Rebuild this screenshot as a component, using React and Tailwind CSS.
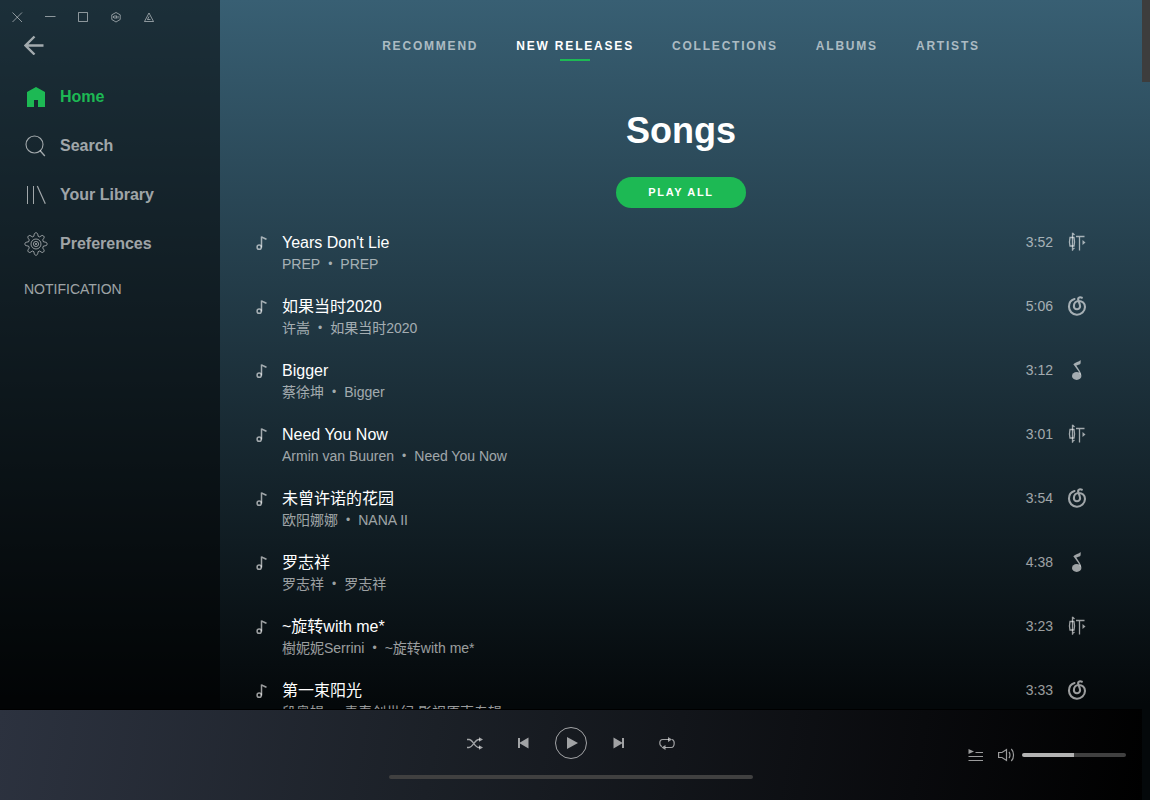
const windowButtons = [
  { label: 'Close', d: 'M0.5 0.5l9.500 9.500M10 0.5l-9.500 9.500' },
  { label: 'Minimize', d: 'M0 4.500h10.500' },
  { label: 'Maximize', d: 'M0.5 0.5h9v9h-9z' },
  { label: 'Developer tools', d: 'M5 0.5L9.200 2.800v4.700L5 10L0.800 7.500V2.800zM2.500 6V4M4 7V3M5.500 6.500V3.500M7 6.500V4' },
  { label: 'Pin on top', d: 'M5 1L9.500 9.500H0.500zM5 4.500L3.500 7.500h3' },
]

const menu = [
  { name: 'Home', icon: HomeIcon, active: true },
  { name: 'Search', icon: SearchIcon },
  { name: 'Your Library', icon: LibraryIcon },
  { name: 'Preferences', icon: GearIcon },
]

const tabs = ['Recommend', 'New Releases', 'Collections', 'Albums', 'Artists']

const songs = [
  { title: "Years Don't Lie", artist: 'PREP', album: 'PREP', time: '3:52', source: 'xiami' },
  { title: '如果当时2020', artist: '许嵩', album: '如果当时2020', time: '5:06', source: 'netease' },
  { title: 'Bigger', artist: '蔡徐坤', album: 'Bigger', time: '3:12', source: 'qq' },
  { title: 'Need You Now', artist: 'Armin van Buuren', album: 'Need You Now', time: '3:01', source: 'xiami' },
  { title: '未曾许诺的花园', artist: '欧阳娜娜', album: 'NANA II', time: '3:54', source: 'netease' },
  { title: '罗志祥', artist: '罗志祥', album: '罗志祥', time: '4:38', source: 'qq' },
  { title: '~旋转with me*', artist: '樹妮妮Serrini', album: '~旋转with me*', time: '3:23', source: 'xiami' },
  { title: '第一束阳光', artist: '段奥娟', album: '青春创世纪 影视原声专辑', time: '3:33', source: 'netease' },
]

function HomeIcon() {
  return (
    <svg className="w-6 h-6" viewBox="0 0 24 24" fill="currentColor">
      <path d="M12 2L3 7v15h7v-7h4v7h7V7z" />
    </svg>
  )
}

function SearchIcon() {
  return (
    <svg className="w-6 h-6" viewBox="0 0 24 24" fill="none" stroke="currentColor" strokeWidth="1.1">
      <circle cx="10.500" cy="10.500" r="8.500" />
      <path d="M16 16.500L20.800 22" strokeWidth="1.300" />
    </svg>
  )
}

function LibraryIcon() {
  return (
    <svg className="w-6 h-6" viewBox="0 0 24 24" fill="none" stroke="currentColor">
      <path d="M3.500 3v18M9.500 3v18" />
      <path d="M13.300 3L21.300 20.800" strokeWidth="1.200" />
    </svg>
  )
}

function GearIcon() {
  return (
    <svg className="w-6 h-6" viewBox="0 0 24 24" fill="none" stroke="currentColor" strokeWidth=".9">
      <path d="M9.900 4.200C10.200 1.500 10.800.8 12 .8s1.800.7 2.100 3.400l1.600.7c2.100-1.700 3-1.800 3.900-.9s.8 1.800-.9 3.900l.7 1.900c2.700.3 3.800.9 3.800 2.200s-1.100 1.800-3.800 2.100l-.7 1.900c1.700 2.100 1.800 3 .9 3.900s-1.800.8-3.900-.9l-1.600.7c-.3 2.700-.9 3.500-2.100 3.500s-1.800-.8-2.100-3.500l-1.600-.7c-2.100 1.700-3 1.800-3.900.9s-.8-1.800.9-3.900l-.7-1.900C1.900 13.800.8 13.300.8 12s1.100-1.900 3.800-2.200l.7-1.900C3.600 5.800 3.500 4.900 4.400 4s1.800-.8 3.900.9z" />
      <circle cx="12" cy="12" r="5" />
      <circle cx="12" cy="12" r="2.600" />
      <circle cx="12" cy="12" r=".7" />
    </svg>
  )
}

function NoteIcon() {
  return (
    <svg className="w-3 h-4" viewBox="0 0 12 16" fill="none" stroke="currentColor" strokeWidth="1.500">
      <circle cx="3.200" cy="12.200" r="2.100" />
      <path d="M5.500 12.500V1.500c.5 1.300 2.800 1.300 5 2.800" />
    </svg>
  )
}

function SourceIcon({ source }) {
  if (source === 'xiami') {
    return (
      <svg className="w-5 h-5" viewBox="0 0 20 20" fill="none" stroke="currentColor" strokeWidth="1.300">
        <path d="M3 5.500h4c.6 2.500.6 6 0 8.500H3c-.6-2.500-.6-6 0-8.500z" />
        <path d="M5.500.8v18M5.500 1l2 2M5.500 17.500l2-1.500M9 4.500h8.500M12.500 4.500v14" />
        <path d="M15.500 8v5l3-2.500z" fill="currentColor" stroke="none" />
      </svg>
    )
  }
  if (source === 'netease') {
    return (
      <svg className="w-5 h-5" viewBox="0 0 20 20" fill="none" stroke="currentColor" strokeWidth="2.100" strokeLinecap="round">
        <path d="M7.500 3C4.200 3.900 2 6.800 2 10.500A8 8 0 0 0 18 11c0-3.800-2.800-6-6.300-6-3 0-4.800 2.300-4.800 5a3.100 3.100 0 0 0 6.200.4C13.100 8 11.100 4.500 11.100 3c0-1.600 2-2.200 3.700-1.300" />
      </svg>
    )
  }
  return (
    <svg className="w-5 h-5" viewBox="0 0 20 20" fill="currentColor">
      <ellipse cx="9.700" cy="16" rx="4.700" ry="3.900" />
      <path d="M13.600 0c.2 1.700.2 3-.3 3.900-.9.800-2.600.9-4 1.700 2.400 3.600 5 6.900 5 9.900l-1.600-1.800C11.500 10.500 8.400 7.500 6.300 4.300 8.300 1.900 11.900 2 13.600 0z" />
    </svg>
  )
}

function Sidebar() {
  return (
    <aside className="w-[220px] shrink-0 bg-black/50 text-white/60">
      <div className="flex gap-[22px] px-3 pt-3 text-white/50">
        {windowButtons.map((b) => (
          <button key={b.label} aria-label={b.label} className="w-[11px] h-[11px]">
            <svg className="w-[11px] h-[11px]" viewBox="0 0 11 11" fill="none" stroke="currentColor" strokeWidth="1">
              <path d={b.d} />
            </svg>
          </button>
        ))}
      </div>

      <button aria-label="Back" className="block ml-6 mt-3">
        <svg className="w-5 h-5" viewBox="0 0 20 20" fill="none" stroke="currentColor" strokeWidth="2.400">
          <path d="M10.500 1.500L1.500 10.500L10.500 19.500M1.500 10.500H19.500" />
        </svg>
      </button>

      <nav className="mt-[17px] flex flex-col">
        {menu.map(({ name, icon: Icon, active }) => (
          <a
            key={name}
            href="#"
            className={`flex items-center gap-3 h-[49px] px-6 text-base font-bold ${active ? 'text-[#1db954]' : ''}`}
          >
            <Icon />
            {name}
          </a>
        ))}
      </nav>
      <h3 className="px-6 mt-[11px] text-sm">NOTIFICATION</h3>
    </aside>
  )
}

function Song({ song }) {
  return (
    <li className="flex h-16 text-white/60">
      <div className="w-[26px] pt-[11px]">
        <NoteIcon />
      </div>
      <div className="flex-1 min-w-0 pt-2">
        <div className="text-base leading-[22px] text-white truncate">{song.title}</div>
        <div className="flex items-center gap-2 text-sm leading-5 whitespace-nowrap">
          <a href="#">{song.artist}</a>
          <span className="text-xs leading-5">•</span>
          <a href="#">{song.album}</a>
        </div>
      </div>
      <div className="flex items-start gap-[14px] pt-2">
        <span className="text-sm">{song.time}</span>
        <SourceIcon source={song.source} />
      </div>
    </li>
  )
}

function Player() {
  return (
    <footer className="grid grid-cols-[1fr_364px_1fr] items-center h-[91px] mr-2 border-t border-black bg-[linear-gradient(100deg,#2c323f,#1b2027_38%,#090a0d_80%,#000)] text-white/60">
      <div />
      <div className="flex flex-col items-center gap-4 pb-1">
        <div className="flex items-center gap-8">
          <button aria-label="Shuffle" className="w-4">
            <svg className="w-4 h-4" viewBox="0 0 16 16" fill="none" stroke="currentColor" strokeWidth="1.300">
              <path d="M0 4.500h2c4 0 5.500 8 10 8h1M0 12.500h2c4 0 5.500-8 10-8h1" />
              <path d="M12 2.300l4 2.200-4 2.200zM12 10.300l4 2.200-4 2.200z" fill="currentColor" stroke="none" />
            </svg>
          </button>
          <button aria-label="Previous" className="w-4">
            <svg className="w-4 h-4" viewBox="0 0 16 16" fill="currentColor">
              <path d="M3 3h2v4.500L13.500 2.500v11L5 8.500V13H3z" />
            </svg>
          </button>
          <button aria-label="Play" className="w-8 h-8 -mx-2 rounded-full border border-white/60 flex items-center justify-center">
            <svg className="w-4 h-4" viewBox="0 0 16 16" fill="currentColor">
              <path d="M4 2v12l11-6z" />
            </svg>
          </button>
          <button aria-label="Next" className="w-4">
            <svg className="w-4 h-4" viewBox="0 0 16 16" fill="currentColor">
              <path d="M13 3h-2v4.500L2.500 2.500v11L11 8.500V13h2z" />
            </svg>
          </button>
          <button aria-label="Repeat" className="w-4">
            <svg className="w-4 h-4" viewBox="0 0 16 16" fill="none" stroke="currentColor" strokeWidth="1.200">
              <path d="M3 11.500C1.500 11 .8 10 .8 8s.7-3.500 3-3.500H10M13 4.500c1.500.5 2.200 1.500 2.200 3.500s-.7 4.500-3 4.500H6" />
              <path d="M9 2l4 2.500L9 7zM6.500 10l-4 2.500 4 2.500z" fill="currentColor" stroke="none" />
            </svg>
          </button>
        </div>
        <input
          type="range"
          aria-label="Progress"
          defaultValue="0"
          className="block w-full h-1 rounded-full appearance-none bg-[#404040] [&::-webkit-slider-thumb]:appearance-none [&::-webkit-slider-thumb]:w-0"
        />
      </div>
      <div className="flex items-center justify-end pr-4">
        <button aria-label="Queue">
          <svg className="w-4 h-4" viewBox="0 0 16 16" fill="none" stroke="currentColor" strokeWidth="1">
            <path d="M7.500 5.500H15M.5 9.500H15M.5 13.500H15" />
            <path d="M.5 2v5L6 4.500z" fill="currentColor" stroke="none" />
          </svg>
        </button>
        <button aria-label="Mute" className="ml-[14px]">
          <svg className="w-[17px] h-4" viewBox="0 0 17 16" fill="none" stroke="currentColor" strokeWidth="1.200">
            <path d="M.6 5.500H4L8.500 2.500v11L4 10.500H.6z" />
            <path d="M11 5c1.300 1.500 1.300 4.500 0 6M13.300 2c3 3 3 9 0 12" />
          </svg>
        </button>
        <input
          type="range"
          aria-label="Volume"
          defaultValue="50"
          className="block ml-[7px] w-[104px] h-1 rounded-full appearance-none bg-linear-to-r from-[#b3b3b3] from-50% to-[#404040] to-50% [&::-webkit-slider-thumb]:appearance-none [&::-webkit-slider-thumb]:w-0"
        />
      </div>
    </footer>
  )
}

export default function App() {
  return (
    <div className="h-screen flex flex-col overflow-hidden bg-[linear-gradient(#385f73,#04080a_88%)] font-['Liberation_Sans','Noto_Sans_CJK_SC',sans-serif]">
      <div className="flex flex-1 min-h-0">
        <Sidebar />

        <main className="relative flex-1 min-w-0 overflow-hidden pr-2">
          <nav className="flex justify-center gap-[38px] pt-9">
            {tabs.map((tab) => (
              <a
                key={tab}
                href="#"
                className={`flex flex-col items-center gap-[3px] text-xs leading-5 font-bold uppercase tracking-[0.15em] ${tab === 'New Releases' ? 'text-white' : 'text-white/60'}`}
              >
                {tab}
                {tab === 'New Releases' && <span className="w-[30px] h-0.5 bg-[#1db954]" />}
              </a>
            ))}
          </nav>

          <div className="flex flex-col items-center mt-[46px]">
            <h1 className="text-4xl leading-12 font-bold text-white">Songs</h1>
            <button className="mt-[22px] h-[31px] px-8 rounded-full bg-[#1db954] text-white text-[11px] font-bold tracking-[0.15em]">
              PLAY ALL
            </button>
          </div>

          <ul className="mt-4 pl-9 pr-[55px]">
            {songs.map((song) => (
              <Song key={song.title} song={song} />
            ))}
          </ul>

          {/* scrollbar thumb */}
          <div className="absolute top-0 right-0 w-2 h-[82px] bg-[#3d3d3d]" />
        </main>
      </div>
      <Player />
    </div>
  )
}
